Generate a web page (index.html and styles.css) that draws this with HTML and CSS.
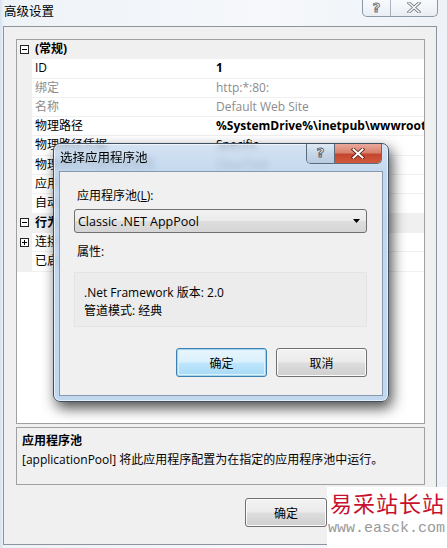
FILE: index.html
```html
<!DOCTYPE html>
<html lang="zh-CN">
<head>
    <meta charset="UTF-8">
    <title>高级设置</title>
    <link rel="stylesheet" href="styles.css">
</head>
<body>

    <!-- 标题栏 -->
    <div class="titlebar">
        <span class="title">高级设置</span>
        <div class="caption">
            <span class="cap-btn help">?</span>
            <span class="cap-btn close">
                <svg width="14" height="11" viewBox="0 0 14 11">
                    <path d="M2 1 L12 10 M12 1 L2 10" stroke="#7b7f86" stroke-width="3.2" stroke-linecap="square"/>
                    <path d="M2 1 L12 10 M12 1 L2 10" stroke="#fbfbfb" stroke-width="1.4" stroke-linecap="square"/>
                </svg>
            </span>
        </div>
    </div>

    <div class="frame">
        <!-- 属性网格 -->
        <div class="grid">
            <div class="pg-row cat">
                <span class="gut"><svg width="9" height="9" viewBox="0 0 9 9"><rect x="0.5" y="0.5" width="8" height="8" fill="#fff" stroke="#222"/><path d="M2 4.5 H7" stroke="#000"/></svg></span>
                <span class="pg-name">(常规)</span>
            </div>
            <div class="pg-row"><span class="gut"></span><span class="pg-name">ID</span><span class="pg-val bold">1</span></div>
            <div class="pg-row off"><span class="gut"></span><span class="pg-name">绑定</span><span class="pg-val">http:*:80:</span></div>
            <div class="pg-row off"><span class="gut"></span><span class="pg-name">名称</span><span class="pg-val">Default Web Site</span></div>
            <div class="pg-row"><span class="gut"></span><span class="pg-name">物理路径</span><span class="pg-val bold">%SystemDrive%\inetpub\wwwroot</span></div>
            <div class="pg-row"><span class="gut"></span><span class="pg-name">物理路径凭据</span><span class="pg-val">Specific</span></div>
            <div class="pg-row"><span class="gut"></span><span class="pg-name">物理路径凭据登录类型</span><span class="pg-val">ClearText</span></div>
            <div class="pg-row"><span class="gut"></span><span class="pg-name">应用程序池</span><span class="pg-val">Classic .NET AppPool</span></div>
            <div class="pg-row"><span class="gut"></span><span class="pg-name">自动启动</span><span class="pg-val">True</span></div>
            <div class="pg-row cat">
                <span class="gut"><svg width="9" height="9" viewBox="0 0 9 9"><rect x="0.5" y="0.5" width="8" height="8" fill="#fff" stroke="#222"/><path d="M2 4.5 H7" stroke="#000"/></svg></span>
                <span class="pg-name">行为</span>
            </div>
            <div class="pg-row">
                <span class="gut"><svg width="9" height="9" viewBox="0 0 9 9"><rect x="0.5" y="0.5" width="8" height="8" fill="#fff" stroke="#222"/><path d="M2 4.5 H7 M4.5 2 V7" stroke="#000"/></svg></span>
                <span class="pg-name">连接限制</span><span class="pg-val"></span>
            </div>
            <div class="pg-row"><span class="gut"></span><span class="pg-name">已启用的协议</span><span class="pg-val">http</span></div>
        </div>

        <!-- 说明 -->
        <div class="desc">
            <p class="desc-title">应用程序池</p>
            <p>[applicationPool] 将此应用程序配置为在指定的应用程序池中运行。</p>
        </div>

        <div class="actions">
            <button class="btn">确定</button>
        </div>
    </div>

    <!-- 选择应用程序池 对话框 -->
    <div class="dlg">
        <div class="dlg-title">
            <span>选择应用程序池</span>
            <div class="dlg-caption">
                <span class="dlg-help">?</span>
                <span class="dlg-close">
                    <svg width="14" height="11" viewBox="0 0 14 11">
                        <path d="M2.5 1.5 L11.5 9.5 M11.5 1.5 L2.5 9.5" stroke="#5a1a12" stroke-width="3.6" stroke-linecap="square"/>
                        <path d="M2.5 1.5 L11.5 9.5 M11.5 1.5 L2.5 9.5" stroke="#fff" stroke-width="2" stroke-linecap="square"/>
                    </svg>
                </span>
            </div>
        </div>
        <div class="dlg-body">
            <p class="lbl">应用程序池(<u>L</u>):</p>
            <div class="combo">
                <span>Classic .NET AppPool</span>
                <svg width="7" height="4" viewBox="0 0 7 4"><path d="M0 0 H7 L3.5 4 Z" fill="#000"/></svg>
            </div>
            <p class="lbl attr">属性:</p>
            <div class="props">
                <p>.Net Framework 版本: 2.0</p>
                <p>管道模式: 经典</p>
            </div>
            <div class="dlg-actions">
                <button class="btn default">确定</button>
                <button class="btn">取消</button>
            </div>
        </div>
    </div>

    <!-- 水印 -->
    <div class="mark">
        <p class="mark-cn">易采站长站</p>
        <p class="mark-en">www.easck.com</p>
    </div>

</body>
</html>
```

FILE: styles.css
```css
body {
    margin: 0;
    width: 447px;
    height: 548px;
    overflow: hidden;
    position: relative;
    font-family: "Open Sans", "Noto Sans CJK SC", sans-serif;
    font-size: 12px;
    color: #000;
    background: linear-gradient(90deg, #d9e3ee 0, #eef3f8 4px, #f6f8fb 60%, #eef2f7 100%);
}
p {
    margin: 0;
}

/* 标题栏 */
.titlebar {
    height: 26px;
    display: flex;
    justify-content: space-between;
    align-items: flex-start;
}
.title {
    margin: 4px 0 0 4px;
    line-height: 16px;
    font-size: 12.5px;
}
.caption {
    display: flex;
    margin-right: 9px;
    margin-top: -1px;
    height: 17px;
    border: 1px solid #8d98a6;
    border-top: none;
    border-radius: 0 0 5px 5px;
    background: linear-gradient(#f9fbfd, #e9eef4);
    overflow: hidden;
}
.cap-btn {
    display: flex;
    align-items: center;
    justify-content: center;
}
.cap-btn.help {
    width: 27px;
    border-right: 1px solid #aab3be;
    font-family: "DejaVu Sans", sans-serif;
    font-size: 13px;
    font-weight: bold;
    color: #fff;
    -webkit-text-stroke: 1px #6d737b;
}
.cap-btn.close {
    width: 46px;
}

/* 外框 */
.frame {
    margin: 0 10px 0 3px;
    height: 519px;
    border: 1px solid #8e949b;
    background: #f0f0f0;
    padding: 12px 11px 0 12px;
    box-sizing: border-box;
}

/* 属性网格 */
.grid {
    height: 385px;
    border: 1px solid #a0a0a0;
    background: #fff;
    box-sizing: border-box;
    overflow: hidden;
}
.pg-row {
    display: grid;
    grid-template-columns: 15px 181px 1fr;
    height: 19.3px;
}
.pg-row > span {
    border-bottom: 1px solid #f0f0f0;
    line-height: 18px;
    white-space: nowrap;
    overflow: hidden;
}
.gut {
    background: #f0f0f0;
    display: flex;
    align-items: center;
    justify-content: center;
}
.pg-name {
    padding-left: 3px;
}
.pg-val {
    padding-left: 3px;
}
.cat {
    background: #f0f0f0;
}
.cat .pg-name {
    grid-column: 2 / 4;
    font-weight: bold;
}
.off .pg-name,
.off .pg-val {
    color: #8d8d8d;
}
.bold {
    font-weight: bold;
}

/* 说明区 */
.desc {
    margin-top: 3px;
    height: 58px;
    border: 1px solid #a0a0a0;
    box-sizing: border-box;
    padding: 3px 5px;
    line-height: 19px;
}
.desc-title {
    font-weight: bold;
}

.actions {
    display: flex;
    justify-content: flex-end;
    margin-top: 13px;
    padding-right: 98px;
}
.actions .btn {
    width: 82px;
}

/* 按钮 */
.btn {
    height: 29px;
    border: 1px solid #707070;
    border-radius: 3px;
    background: linear-gradient(#f2f2f2 0, #ebebeb 48%, #dddddd 52%, #cfcfcf 100%);
    box-shadow: inset 0 0 0 1px #fbfbfb;
    font: inherit;
    color: #000;
    padding: 0;
}
.btn.default {
    border-color: #3c7fb1;
    background: linear-gradient(#eaf6fd 0, #d9f0fc 48%, #bee6fd 52%, #a7d9f5 100%);
    box-shadow: inset 0 0 0 1px #a6d6ef, inset 0 0 0 2px #ddf1fb;
}

/* 对话框 */
.dlg {
    position: absolute;
    left: 53px;
    top: 143px;
    width: 336px;
    height: 259px;
    box-sizing: border-box;
    border: 1px solid #3f4f62;
    border-radius: 7px;
    padding: 0 5px 5px 5px;
    background: linear-gradient(rgba(196, 216, 238, 0.72) 0, rgba(188, 211, 236, 0.9) 30px, #c2d8ee 100%);
    -webkit-backdrop-filter: blur(3px);
    backdrop-filter: blur(3px);
    box-shadow: inset 0 0 0 1px rgba(255, 255, 255, 0.6), 3px 6px 14px rgba(0, 0, 0, 0.7);
    display: flex;
    flex-direction: column;
}
.dlg-title {
    height: 27px;
    flex: none;
    display: flex;
    justify-content: space-between;
    align-items: flex-start;
}
.dlg-title > span {
    margin: 6px 0 0 1px;
    font-size: 12.5px;
    line-height: 16px;
}
.dlg-caption {
    display: flex;
    height: 19px;
    margin-right: 1px;
    border: 1px solid #5b6a7c;
    border-top: none;
    border-radius: 0 0 5px 5px;
    overflow: hidden;
}
.dlg-help {
    width: 27px;
    background: linear-gradient(#dfe9f4, #c7d7e8 50%, #b9cbe0);
    border-right: 1px solid #5b6a7c;
    text-align: center;
    line-height: 18px;
    font-family: "DejaVu Sans", sans-serif;
    font-size: 13px;
    font-weight: bold;
    color: #fff;
    -webkit-text-stroke: 1px #55606d;
}
.dlg-close {
    width: 46px;
    display: flex;
    align-items: center;
    justify-content: center;
    background: linear-gradient(#e9a99c 0, #d9826f 45%, #c4452e 55%, #d1593c 100%);
}
.dlg-body {
    flex: 1;
    border: 1px solid #8899ad;
    background: #f0f0f0;
    padding: 16px 15px 0 14px;
}
.lbl {
    padding-left: 3px;
    line-height: 16px;
}
.combo {
    margin-top: 5px;
    height: 24px;
    box-sizing: border-box;
    border: 1px solid #707070;
    border-radius: 3px;
    background: linear-gradient(#f2f2f2 0, #ebebeb 48%, #dddddd 52%, #d5d5d5 100%);
    display: flex;
    justify-content: space-between;
    align-items: center;
    padding: 0 6px 0 3px;
    font-size: 12.5px;
}
.attr {
    margin-top: 11px;
}
.props {
    margin-top: 12px;
    height: 55px;
    box-sizing: border-box;
    border: 1px solid #e4e4e4;
    background: #ececec;
    padding: 11px 9px 0;
    line-height: 18px;
}
.dlg-actions {
    display: flex;
    justify-content: flex-end;
    gap: 9px;
    margin-top: 21px;
}
.dlg-actions .btn {
    width: 91px;
}

/* 水印 */
.mark {
    position: absolute;
    left: 327px;
    top: 487px;
    width: 120px;
    height: 61px;
    background: #fff;
}
.mark-cn {
    margin: 2px 0 0 3px;
    font-family: "Noto Sans CJK SC", sans-serif;
    font-size: 22px;
    line-height: 26px;
    color: #c8102e;
    letter-spacing: 1px;
}
.mark-en {
    margin: 5px 0 0 1px;
    font-family: "Liberation Mono", monospace;
    font-size: 15px;
    line-height: 18px;
    color: #9a9a9a;
}
```
